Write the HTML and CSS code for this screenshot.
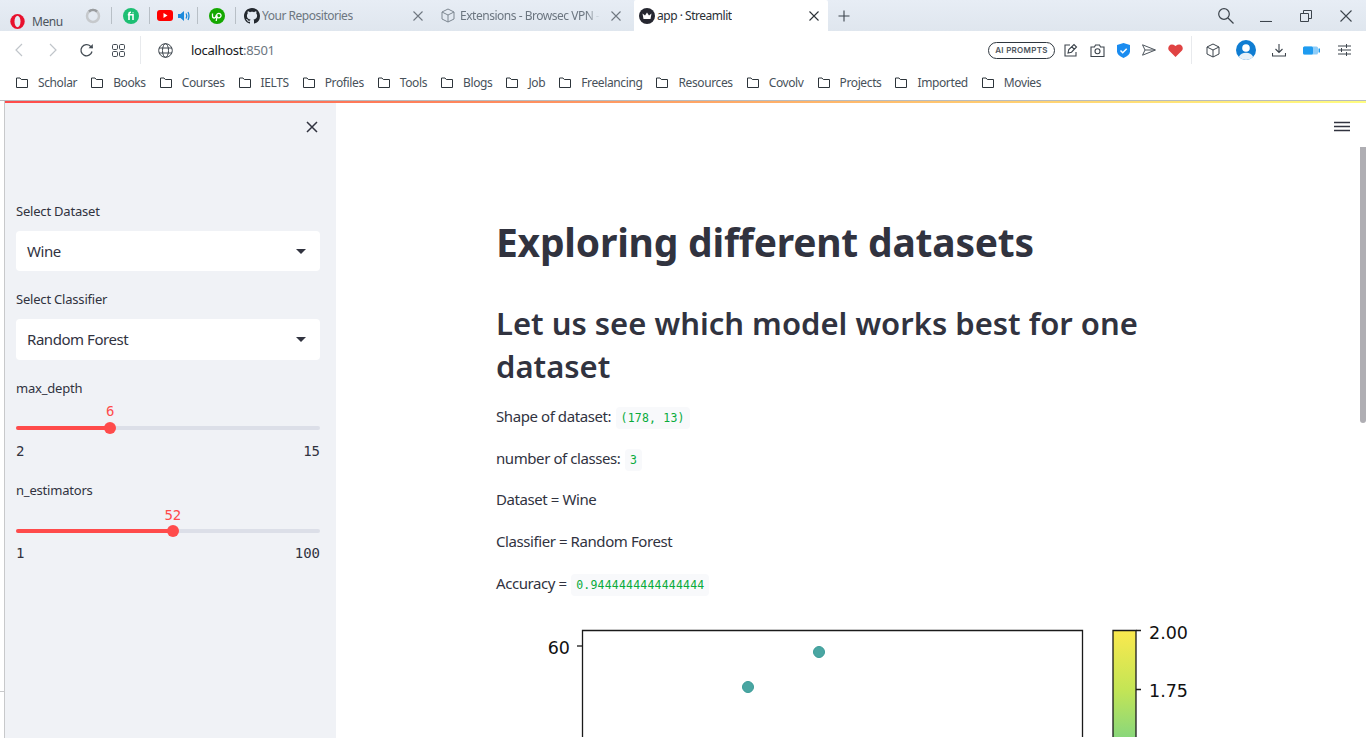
FILE: index.html
```html
<!DOCTYPE html>
<html lang="en">
<head>
<meta charset="utf-8">
<title>app · Streamlit</title>
<link rel="stylesheet" href="styles.css">
</head>
<body>
<div class="window">
  <header class="tabstrip">
    <div class="opera">
      <svg class="opera-logo" width="15" height="15" viewBox="0 0 15 15"><ellipse cx="7.500" cy="7.500" rx="7.200" ry="7.500" fill="#e8112d"/><ellipse cx="7.500" cy="7.500" rx="3" ry="5.700" fill="#e4eaf2"/></svg>
      <span>Menu</span>
    </div>
    <div class="pin pin-start">
      <svg width="18" height="18" viewBox="0 0 18 18"><circle cx="9" cy="9" r="6" fill="none" stroke="#c6c9cc" stroke-width="2.500"/><path d="M5 4.500A6 6 0 0 1 13 4.500" fill="none" stroke="#9a9da0" stroke-width="2.500"/></svg>
    </div>
    <div class="pin">
      <svg width="16" height="16" viewBox="0 0 16 16"><circle cx="8" cy="8" r="8" fill="#1dbf73"/><path d="M6 12V6.800H4.800M6 6.800V5.800Q6 4.200 8 4.200M6 6.800H10V12M10 4.400V5.200" fill="none" stroke="#fff" stroke-width="1.600"/></svg>
    </div>
    <div class="pin pin-yt">
      <svg width="16" height="11" viewBox="0 0 16 11"><rect width="16" height="11" rx="3" fill="#f00"/><path d="M6.500 3v5l4-2.500z" fill="#fff"/></svg>
      <svg width="12" height="12" viewBox="0 0 12 12"><path d="M0 4h2.500L6 1v10L2.500 8H0z" fill="#1c8adb"/><path d="M8 3.500Q9.500 6 8 8.500M10 2Q12 6 10 10" fill="none" stroke="#1c8adb" stroke-width="1.300"/></svg>
    </div>
    <div class="pin">
      <svg width="16" height="16" viewBox="0 0 16 16"><circle cx="8" cy="8" r="8" fill="#14a800"/><path d="M3.500 5.500V8Q3.500 10 5.200 10T7 8L7.600 6.800Q8.300 5.300 9.800 5.300A2.200 2.200 0 1 1 9.800 9.800Q8.500 9.800 7.800 8.500M7.200 13L8.200 7.500" fill="none" stroke="#fff" stroke-width="1.300"/></svg>
    </div>
    <div class="tab tab-gh">
      <svg width="16" height="16" viewBox="0 0 16 16"><path fill="#24292f" d="M8 0C3.580 0 0 3.580 0 8c0 3.540 2.290 6.530 5.470 7.590.4.070.55-.170.55-.380 0-.190-.010-.820-.010-1.490-2.010.370-2.530-.490-2.690-.940-.090-.230-.480-.940-.820-1.130-.280-.150-.680-.520-.010-.530.630-.010 1.080.580 1.230.820.720 1.210 1.870.870 2.330.660.070-.520.280-.870.510-1.070-1.780-.200-3.640-.890-3.640-3.950 0-.870.310-1.590.820-2.150-.080-.200-.360-1.020.080-2.120 0 0 .670-.210 2.200.820.640-.180 1.320-.270 2-.270s1.360.090 2 .270c1.530-1.040 2.200-.820 2.200-.820.440 1.100.160 1.920.080 2.120.510.560.820 1.270.820 2.150 0 3.070-1.870 3.750-3.650 3.950.290.250.540.730.540 1.480 0 1.070-.010 1.930-.010 2.200 0 .210.150.460.550.380A8.010 8.010 0 0 0 16 8c0-4.420-3.580-8-8-8z"/></svg>
      <span class="tab-title">Your Repositories</span>
      <svg class="tab-close" width="12" height="12" viewBox="0 0 12 12"><path d="M1.500 1.500l9 9M10.500 1.500l-9 9" stroke="#6f7780" stroke-width="1.100" fill="none"/></svg>
    </div>
    <div class="tab tab-ext">
      <svg width="14" height="15" viewBox="0 0 14 15"><path d="M7 1l6 3v7l-6 3-6-3V4zM1 4l6 3 6-3M7 7v7" fill="none" stroke="#7c8690" stroke-width="1"/></svg>
      <span class="tab-title tab-fade">Extensions - Browsec VPN -</span>
      <svg class="tab-close" width="12" height="12" viewBox="0 0 12 12"><path d="M1.500 1.500l9 9M10.500 1.500l-9 9" stroke="#6f7780" stroke-width="1.100" fill="none"/></svg>
    </div>
    <div class="tab tab-active">
      <svg width="16" height="16" viewBox="0 0 16 16"><circle cx="8" cy="8" r="8" fill="#262730"/><path d="M3.500 5.500L6 7.500 8 4.500l2 3 2.500-2-1 5.500h-7z" fill="#fff"/></svg>
      <span class="tab-title">app · Streamlit</span>
      <svg class="tab-close" width="12" height="12" viewBox="0 0 12 12"><path d="M1.500 1.500l9 9M10.500 1.500l-9 9" stroke="#2c3238" stroke-width="1.100" fill="none"/></svg>
    </div>
    <div class="newtab">
      <svg width="12" height="12" viewBox="0 0 12 12"><path d="M6 .5v11M.5 6h11" stroke="#3c444c" stroke-width="1.100" fill="none"/></svg>
    </div>
    <div class="winctl">
      <span class="winbtn"><svg width="18" height="18" viewBox="0 0 18 18"><circle cx="7" cy="7" r="5.300" fill="none" stroke="#3c444c" stroke-width="1.200"/><path d="M11 11l5.500 5.500" stroke="#3c444c" stroke-width="1.300"/></svg></span>
      <span class="winbtn"><svg width="12" height="12" viewBox="0 0 12 12"><path d="M0 11.500h12" stroke="#3c444c" stroke-width="1.100"/></svg></span>
      <span class="winbtn"><svg width="12" height="12" viewBox="0 0 12 12"><path d="M.5 3.500h8v8h-8zM3.500 3.500V.5h8v8h-3" fill="none" stroke="#3c444c" stroke-width="1"/></svg></span>
      <span class="winbtn"><svg width="12" height="12" viewBox="0 0 12 12"><path d="M.5.500l11 11M11.500.5l-11 11" fill="none" stroke="#3c444c" stroke-width="1.100"/></svg></span>
    </div>
  </header>

  <nav class="toolbar">
    <div class="nav-group">
      <span class="nav-btn"><svg width="10" height="14" viewBox="0 0 10 14"><path d="M8 1L2 7l6 6" fill="none" stroke="#c0c5ca" stroke-width="1.200"/></svg></span>
      <span class="nav-btn"><svg width="10" height="14" viewBox="0 0 10 14"><path d="M2 1l6 6-6 6" fill="none" stroke="#c0c5ca" stroke-width="1.200"/></svg></span>
      <span class="nav-btn nav-reload"><svg width="15" height="15" viewBox="0 0 15 15"><path d="M13 8.500A5.600 5.600 0 1 1 11.500 3.200L13.500 5" fill="none" stroke="#444c54" stroke-width="1.300"/><path d="M13.800 1v4.300H9.500z" fill="#444c54"/></svg></span>
      <span class="nav-btn nav-dial"><svg width="13" height="13" viewBox="0 0 13 13"><g fill="none" stroke="#444c54" stroke-width="1"><rect x=".5" y=".5" width="5" height="5" rx="1.200"/><rect x="7.500" y=".5" width="5" height="5" rx="1.200"/><rect x=".5" y="7.500" width="5" height="5" rx="1.200"/><rect x="7.500" y="7.500" width="5" height="5" rx="1.200"/></g></svg></span>
    </div>
    <div class="tool-sep"></div>
    <svg class="globe" width="15" height="15" viewBox="0 0 15 15"><g fill="none" stroke="#3c444c" stroke-width="1"><circle cx="7.500" cy="7.500" r="6.800"/><ellipse cx="7.500" cy="7.500" rx="3" ry="6.800"/><path d="M1 5h13M1 10h13"/></g></svg>
    <div class="url"><span class="url-host">localhost</span><span class="url-port">:8501</span></div>
    <div class="tool-right">
      <span class="ai-pill">AI PROMPTS</span>
      <span class="tslot"><svg width="14" height="14" viewBox="0 0 14 14"><path d="M6 2H1v11h11V9M4 10l.800-3.500L10 1.500 12.500 4 7.500 9.200zM7.500 3.500l3 3" fill="none" stroke="#3c444c" stroke-width="1.100"/></svg></span>
      <span class="tslot"><svg width="15" height="13" viewBox="0 0 15 13"><path d="M1 3h3.500l1-2h4l1 2H14v9.500H1z" fill="none" stroke="#3c444c" stroke-width="1.100"/><circle cx="7.500" cy="7.300" r="2.500" fill="none" stroke="#3c444c" stroke-width="1.100"/></svg></span>
      <span class="tslot"><svg width="13" height="15" viewBox="0 0 13 15"><path d="M6.500 0L13 2v6.500Q13 12 6.500 15 0 12 0 8.500V2z" fill="#1a8cf0"/><path d="M3.500 7.500l2.200 2.200 4-4" fill="none" stroke="#fff" stroke-width="1.500"/></svg></span>
      <span class="tslot"><svg width="14" height="12" viewBox="0 0 14 12"><path d="M.5.800L13.500 6 .5 11.200 3 6zM3 6h10" fill="none" stroke="#4c545c" stroke-width="1"/></svg></span>
      <span class="tslot"><svg width="15" height="13" viewBox="0 0 15 13"><path d="M7.500 13L1 6.500Q-.500 4.500 1 2 3.500-.800 7.500 2 11.500-.800 14 2q1.500 2.500 0 4.500z" fill="#e04343"/></svg></span>
      <div class="tool-sep tool-sep-right"></div>
      <span class="wslot"><svg width="14" height="15" viewBox="0 0 14 15"><path d="M7 1l6 3v7l-6 3-6-3V4zM1 4l6 3 6-3M7 7v7" fill="none" stroke="#3c444c" stroke-width="1"/></svg></span>
      <span class="wslot"><svg width="20" height="20" viewBox="0 0 20 20"><circle cx="10" cy="10" r="10" fill="#0f7dd2"/><circle cx="10" cy="8" r="3.800" fill="#fff"/><path d="M2.800 17Q5 12.800 10 12.800T17.200 17Q14 20 10 20T2.800 17z" fill="#e6f0f8"/></svg></span>
      <span class="wslot"><svg width="14" height="14" viewBox="0 0 14 14"><path d="M7 1v8.500M3.500 6L7 9.500 10.500 6M.5 10v3h13v-3" fill="none" stroke="#3c444c" stroke-width="1.100"/></svg></span>
      <span class="wslot"><svg width="17" height="9" viewBox="0 0 17 9"><rect width="15" height="8" y=".5" rx="1.500" fill="#8fcdf8"/><rect width="10" height="8" y=".5" rx="1.500" fill="#1e9bf0"/><rect x="15.500" y="2.500" width="1.500" height="4" fill="#1e9bf0"/></svg></span>
      <span class="wslot"><svg width="13" height="12" viewBox="0 0 13 12"><path d="M0 2h13M0 6h13M0 10h13M8.500 0v4M3.500 4v4M8.500 8v4" fill="none" stroke="#3c444c" stroke-width="1"/></svg></span>
    </div>
  </nav>

  <nav class="bookmarks">
    <a class="bm"><svg class="folder" width="12" height="11" viewBox="0 0 12 11"><path d="M.5 1h3.500l1.300 1.500h6.200v8h-11z" fill="none" stroke="#2d343a" stroke-width="1"/></svg>Scholar</a>
    <a class="bm"><svg class="folder" width="12" height="11" viewBox="0 0 12 11"><path d="M.5 1h3.500l1.300 1.500h6.200v8h-11z" fill="none" stroke="#2d343a" stroke-width="1"/></svg>Books</a>
    <a class="bm"><svg class="folder" width="12" height="11" viewBox="0 0 12 11"><path d="M.5 1h3.500l1.300 1.500h6.200v8h-11z" fill="none" stroke="#2d343a" stroke-width="1"/></svg>Courses</a>
    <a class="bm"><svg class="folder" width="12" height="11" viewBox="0 0 12 11"><path d="M.5 1h3.500l1.300 1.500h6.200v8h-11z" fill="none" stroke="#2d343a" stroke-width="1"/></svg>IELTS</a>
    <a class="bm"><svg class="folder" width="12" height="11" viewBox="0 0 12 11"><path d="M.5 1h3.500l1.300 1.500h6.200v8h-11z" fill="none" stroke="#2d343a" stroke-width="1"/></svg>Profiles</a>
    <a class="bm"><svg class="folder" width="12" height="11" viewBox="0 0 12 11"><path d="M.5 1h3.500l1.300 1.500h6.200v8h-11z" fill="none" stroke="#2d343a" stroke-width="1"/></svg>Tools</a>
    <a class="bm"><svg class="folder" width="12" height="11" viewBox="0 0 12 11"><path d="M.5 1h3.500l1.300 1.500h6.200v8h-11z" fill="none" stroke="#2d343a" stroke-width="1"/></svg>Blogs</a>
    <a class="bm"><svg class="folder" width="12" height="11" viewBox="0 0 12 11"><path d="M.5 1h3.500l1.300 1.500h6.200v8h-11z" fill="none" stroke="#2d343a" stroke-width="1"/></svg>Job</a>
    <a class="bm"><svg class="folder" width="12" height="11" viewBox="0 0 12 11"><path d="M.5 1h3.500l1.300 1.500h6.200v8h-11z" fill="none" stroke="#2d343a" stroke-width="1"/></svg>Freelancing</a>
    <a class="bm"><svg class="folder" width="12" height="11" viewBox="0 0 12 11"><path d="M.5 1h3.500l1.300 1.500h6.200v8h-11z" fill="none" stroke="#2d343a" stroke-width="1"/></svg>Resources</a>
    <a class="bm"><svg class="folder" width="12" height="11" viewBox="0 0 12 11"><path d="M.5 1h3.500l1.300 1.500h6.200v8h-11z" fill="none" stroke="#2d343a" stroke-width="1"/></svg>Covolv</a>
    <a class="bm"><svg class="folder" width="12" height="11" viewBox="0 0 12 11"><path d="M.5 1h3.500l1.300 1.500h6.200v8h-11z" fill="none" stroke="#2d343a" stroke-width="1"/></svg>Projects</a>
    <a class="bm"><svg class="folder" width="12" height="11" viewBox="0 0 12 11"><path d="M.5 1h3.500l1.300 1.500h6.200v8h-11z" fill="none" stroke="#2d343a" stroke-width="1"/></svg>Imported</a>
    <a class="bm"><svg class="folder" width="12" height="11" viewBox="0 0 12 11"><path d="M.5 1h3.500l1.300 1.500h6.200v8h-11z" fill="none" stroke="#2d343a" stroke-width="1"/></svg>Movies</a>
  </nav>

  <div class="page">
    <div class="edge"><div class="edge-tick"></div></div>
    <div class="app">
      <div class="decoration"></div>
      <div class="app-body">
        <aside class="sidebar">
          <div class="side-close">
            <svg width="12" height="12" viewBox="0 0 12 12"><path d="M1 1l10 10M11 1L1 11" stroke="#31333f" stroke-width="1.500" fill="none"/></svg>
          </div>
          <label class="field-label label-dataset">Select Dataset</label>
          <div class="select"><span>Wine</span><i class="caret"></i></div>
          <label class="field-label label-classifier">Select Classifier</label>
          <div class="select select-tall"><span>Random Forest</span><i class="caret"></i></div>
          <label class="field-label label-depth">max_depth</label>
          <div class="slider slider-depth">
            <div class="slider-value" style="left:31%">6</div>
            <div class="track"><div class="fill" style="width:31%"></div><div class="thumb" style="left:31%"></div></div>
            <div class="slider-range"><span>2</span><span>15</span></div>
          </div>
          <label class="field-label label-est">n_estimators</label>
          <div class="slider slider-est">
            <div class="slider-value" style="left:51.600%">52</div>
            <div class="track"><div class="fill" style="width:51.600%"></div><div class="thumb" style="left:51.600%"></div></div>
            <div class="slider-range"><span>1</span><span>100</span></div>
          </div>
        </aside>
        <main class="main">
          <svg class="hamburger" width="16" height="12" viewBox="0 0 16 12"><path d="M0 1.500h16M0 5.500h16M0 9.500h16" stroke="#31333f" stroke-width="1.600"/></svg>
          <div class="scrollthumb"></div>
          <div class="block">
            <h1>Exploring different datasets</h1>
            <h2>Let us see which model works best for one dataset</h2>
            <p>Shape of dataset: <code>(178, 13)</code></p>
            <p>number of classes: <code>3</code></p>
            <p>Dataset = Wine</p>
            <p>Classifier = Random Forest</p>
            <p>Accuracy = <code>0.9444444444444444</code></p>
            <svg class="plot" width="700" height="113" viewBox="0 0 700 113">
              <defs>
                <linearGradient id="cbar" x1="0" y1="0" x2="0" y2="1">
                  <stop offset="0" stop-color="#fbe94e"/>
                  <stop offset="0.55" stop-color="#c4e555"/>
                  <stop offset="1" stop-color="#89d77b"/>
                </linearGradient>
              </defs>
              <path d="M86.500 113V6.500H586.500V113" fill="none" stroke="#1a1a1a" stroke-width="1.300"/>
              <path d="M81 22h5" stroke="#1a1a1a" stroke-width="1.300"/>
              <text class="tick-text" x="74" y="30" text-anchor="end">60</text>
              <circle cx="252" cy="63" r="5.500" fill="#4aa6a2" stroke="#3a9c98" stroke-width="1"/>
              <circle cx="323" cy="28" r="5.500" fill="#4aa6a2" stroke="#3a9c98" stroke-width="1"/>
              <rect x="617" y="6.500" width="23" height="107" fill="url(#cbar)"/>
              <path d="M617 113V6.500H640V113" fill="none" stroke="#1a1a1a" stroke-width="1.300"/>
              <path d="M640 6.500h5M640 65.500h5" stroke="#1a1a1a" stroke-width="1.300"/>
              <text class="tick-text" x="653" y="15">2.00</text>
              <text class="tick-text" x="653" y="72.500">1.75</text>
            </svg>
          </div>
        </main>
      </div>
    </div>
  </div>
</div>
</body>
</html>
```
FILE: styles.css
```css
* { box-sizing: border-box; }
html, body { margin: 0; padding: 0; height: 100%; overflow: hidden; background: #fff; }
.window { display: flex; flex-direction: column; width: 1366px; height: 738px; overflow: hidden; font-family: "Noto Sans", sans-serif; }

/* Tab strip */
.tabstrip { display: flex; height: 31px; flex: none; background: linear-gradient(#e7edf5, #dfe6ee); font-size: 12px; color: #6c7680; }
.opera { width: 84px; display: flex; align-items: center; padding: 11px 0 0 10px; gap: 7px; color: #4c545c; font-size: 12px; letter-spacing: -.4px; }
.opera-logo { flex: none; }
.pin { width: 38px; height: 17px; margin-top: 7px; display: flex; align-items: center; justify-content: center; border-right: 1px solid #b8bfc6; }
.pin-start { width: 28px; justify-content: flex-start; }
.pin-yt { width: 48px; gap: 5px; }
.tab { display: flex; align-items: center; height: 31px; padding-left: 8px; }
.tab-title { white-space: nowrap; overflow: hidden; letter-spacing: -.48px; margin-left: 2px; }
.tab-close { flex: none; margin-left: auto; }
.tab-gh { width: 201px; padding-right: 13px; }
.tab-ext { width: 197px; padding-left: 4px; padding-right: 12px; }
.tab-ext .tab-title { width: 140px; margin-left: 5px; }
.tab-fade { -webkit-mask-image: linear-gradient(90deg, #000 90%, transparent); mask-image: linear-gradient(90deg, #000 90%, transparent); }
.tab-active { width: 194px; background: #fff; color: #2a3036; padding-left: 5px; padding-right: 8px; border-radius: 2px 2px 0 0; }
.newtab { width: 32px; height: 31px; display: flex; align-items: center; justify-content: center; }
.winctl { margin-left: auto; display: flex; }
.winbtn { width: 40px; height: 31px; display: flex; align-items: center; justify-content: center; }

/* Toolbar */
.toolbar { display: flex; align-items: center; height: 38px; flex: none; background: #fff; }
.nav-group { display: flex; align-items: center; padding-left: 2px; }
.nav-btn { width: 34px; display: flex; justify-content: center; }
.nav-reload { width: 32px; }
.nav-dial { width: 32px; }
.tool-sep { width: 1px; height: 28px; background: #e8eaed; margin-left: 6px; }
.globe { margin-left: 17px; }
.url { margin-left: 18px; font-size: 13px; letter-spacing: -.32px; }
.url-host { color: #16191c; }
.url-port { color: #6c7680; }
.tool-right { margin-left: auto; display: flex; align-items: center; padding-right: 5px; }
.ai-pill { width: 67px; height: 17px; border: 1px solid #2f373f; border-radius: 9px; font-size: 8px; font-weight: 600; letter-spacing: .3px; color: #4c545c; display: flex; align-items: center; justify-content: center; margin-right: 3px; font-family: "Inter", sans-serif; }
.tslot { width: 26px; display: flex; justify-content: center; }
.tool-sep-right { margin: 0 4px 0 3px; }
.wslot { width: 33px; display: flex; justify-content: center; }

/* Bookmarks */
.bookmarks { display: flex; align-items: center; gap: 14px; height: 31px; flex: none; padding: 0 0 5px 16px; background: #fff; font-size: 12px; color: #47515a; letter-spacing: -.38px; }
.bm { display: flex; align-items: center; gap: 10px; white-space: nowrap; }
.folder { flex: none; }

/* Page */
.page { flex: 1; display: flex; min-height: 0; border-top: 1px solid #b8bcc0; }
.edge { width: 5px; flex: none; border-right: 1px solid #c8c9cb; padding-top: 590px; }
.edge-tick { height: 1px; background: #c8c9cb; }
.app { flex: 1; display: flex; flex-direction: column; min-width: 0; }
.decoration { height: 2px; flex: none; background: linear-gradient(90deg, #ff4b4b, #fffd80); }
.app-body { flex: 1; display: flex; min-height: 0; position: relative; color: #31333f; }

/* Sidebar */
.sidebar { width: 331px; flex: none; background: #f0f2f6; padding: 0 16px 0 11px; display: flex; flex-direction: column; }
.side-close { display: flex; justify-content: flex-end; padding: 18px 2px 0 0; height: 99px; flex: none; }
.field-label { font-size: 13px; line-height: 18px; letter-spacing: -.2px; }
.label-dataset { margin-bottom: 11px; }
.label-classifier { margin-top: 19px; margin-bottom: 11px; }
.label-depth { margin-top: 19px; }
.label-est { margin-top: 22px; }
.select { height: 40px; flex: none; background: #fff; border-radius: 4px; padding: 0 11px; display: flex; align-items: center; justify-content: space-between; font-size: 15px; letter-spacing: -.45px; }
.select-tall { height: 41px; padding-bottom: 2px; }
.caret { width: 0; height: 0; border-left: 5px solid transparent; border-right: 5px solid transparent; border-top: 5px solid #31333f; margin-right: 3px; }
.select-tall .caret { margin-top: 2px; }
.slider { position: relative; }
.slider-depth { padding-top: 29px; }
.slider-est { padding-top: 30px; }
.slider-value { position: absolute; transform: translateX(-50%); font: 14px/16px "DejaVu Sans Mono", monospace; color: #ff4b4b; }
.slider-depth .slider-value { top: 6px; }
.slider-est .slider-value { top: 8px; }
.track { position: relative; height: 4px; border-radius: 2px; background: #dcdfe8; }
.fill { height: 4px; border-radius: 2px; background: #ff4b4b; }
.thumb { position: absolute; top: -4px; width: 12px; height: 12px; margin-left: -6px; border-radius: 50%; background: #ff4b4b; }
.slider-range { display: flex; justify-content: space-between; font: 14px/16px "DejaVu Sans Mono", monospace; color: #31333f; }
.slider-depth .slider-range { margin-top: 13px; }
.slider-est .slider-range { margin-top: 12px; }

/* Main */
.main { flex: 1; min-width: 0; background: #fff; overflow: hidden; }
.hamburger { position: absolute; top: 18px; right: 16px; }
.scrollthumb { position: absolute; top: 44px; right: 0; width: 6px; height: 276px; background: #afaeb3; border-radius: 0 0 3px 3px; }
.block { padding: 111px 0 0 160px; width: 830px; }
h1 { margin: 0 0 32px; font-size: 39px; line-height: 56px; font-weight: 700; letter-spacing: -.22px; color: #31333f; }
h2 { margin: 0 0 15px; font-size: 31px; line-height: 43px; font-weight: 600; color: #31333f; }
p { margin: 0 0 15.700px; font-size: 15px; line-height: 26px; letter-spacing: -.42px; }
code { font-family: "DejaVu Sans Mono", monospace; font-size: 11.500px; line-height: 1; letter-spacing: .2px; color: #09ab3b; background: #f8f9fb; border-radius: 4px; padding: 4px 5px; margin-left: 1px; }
.plot { display: block; margin-top: 28px; }
.tick-text { font-family: "DejaVu Sans", sans-serif; font-size: 17.500px; fill: #111; }
```
